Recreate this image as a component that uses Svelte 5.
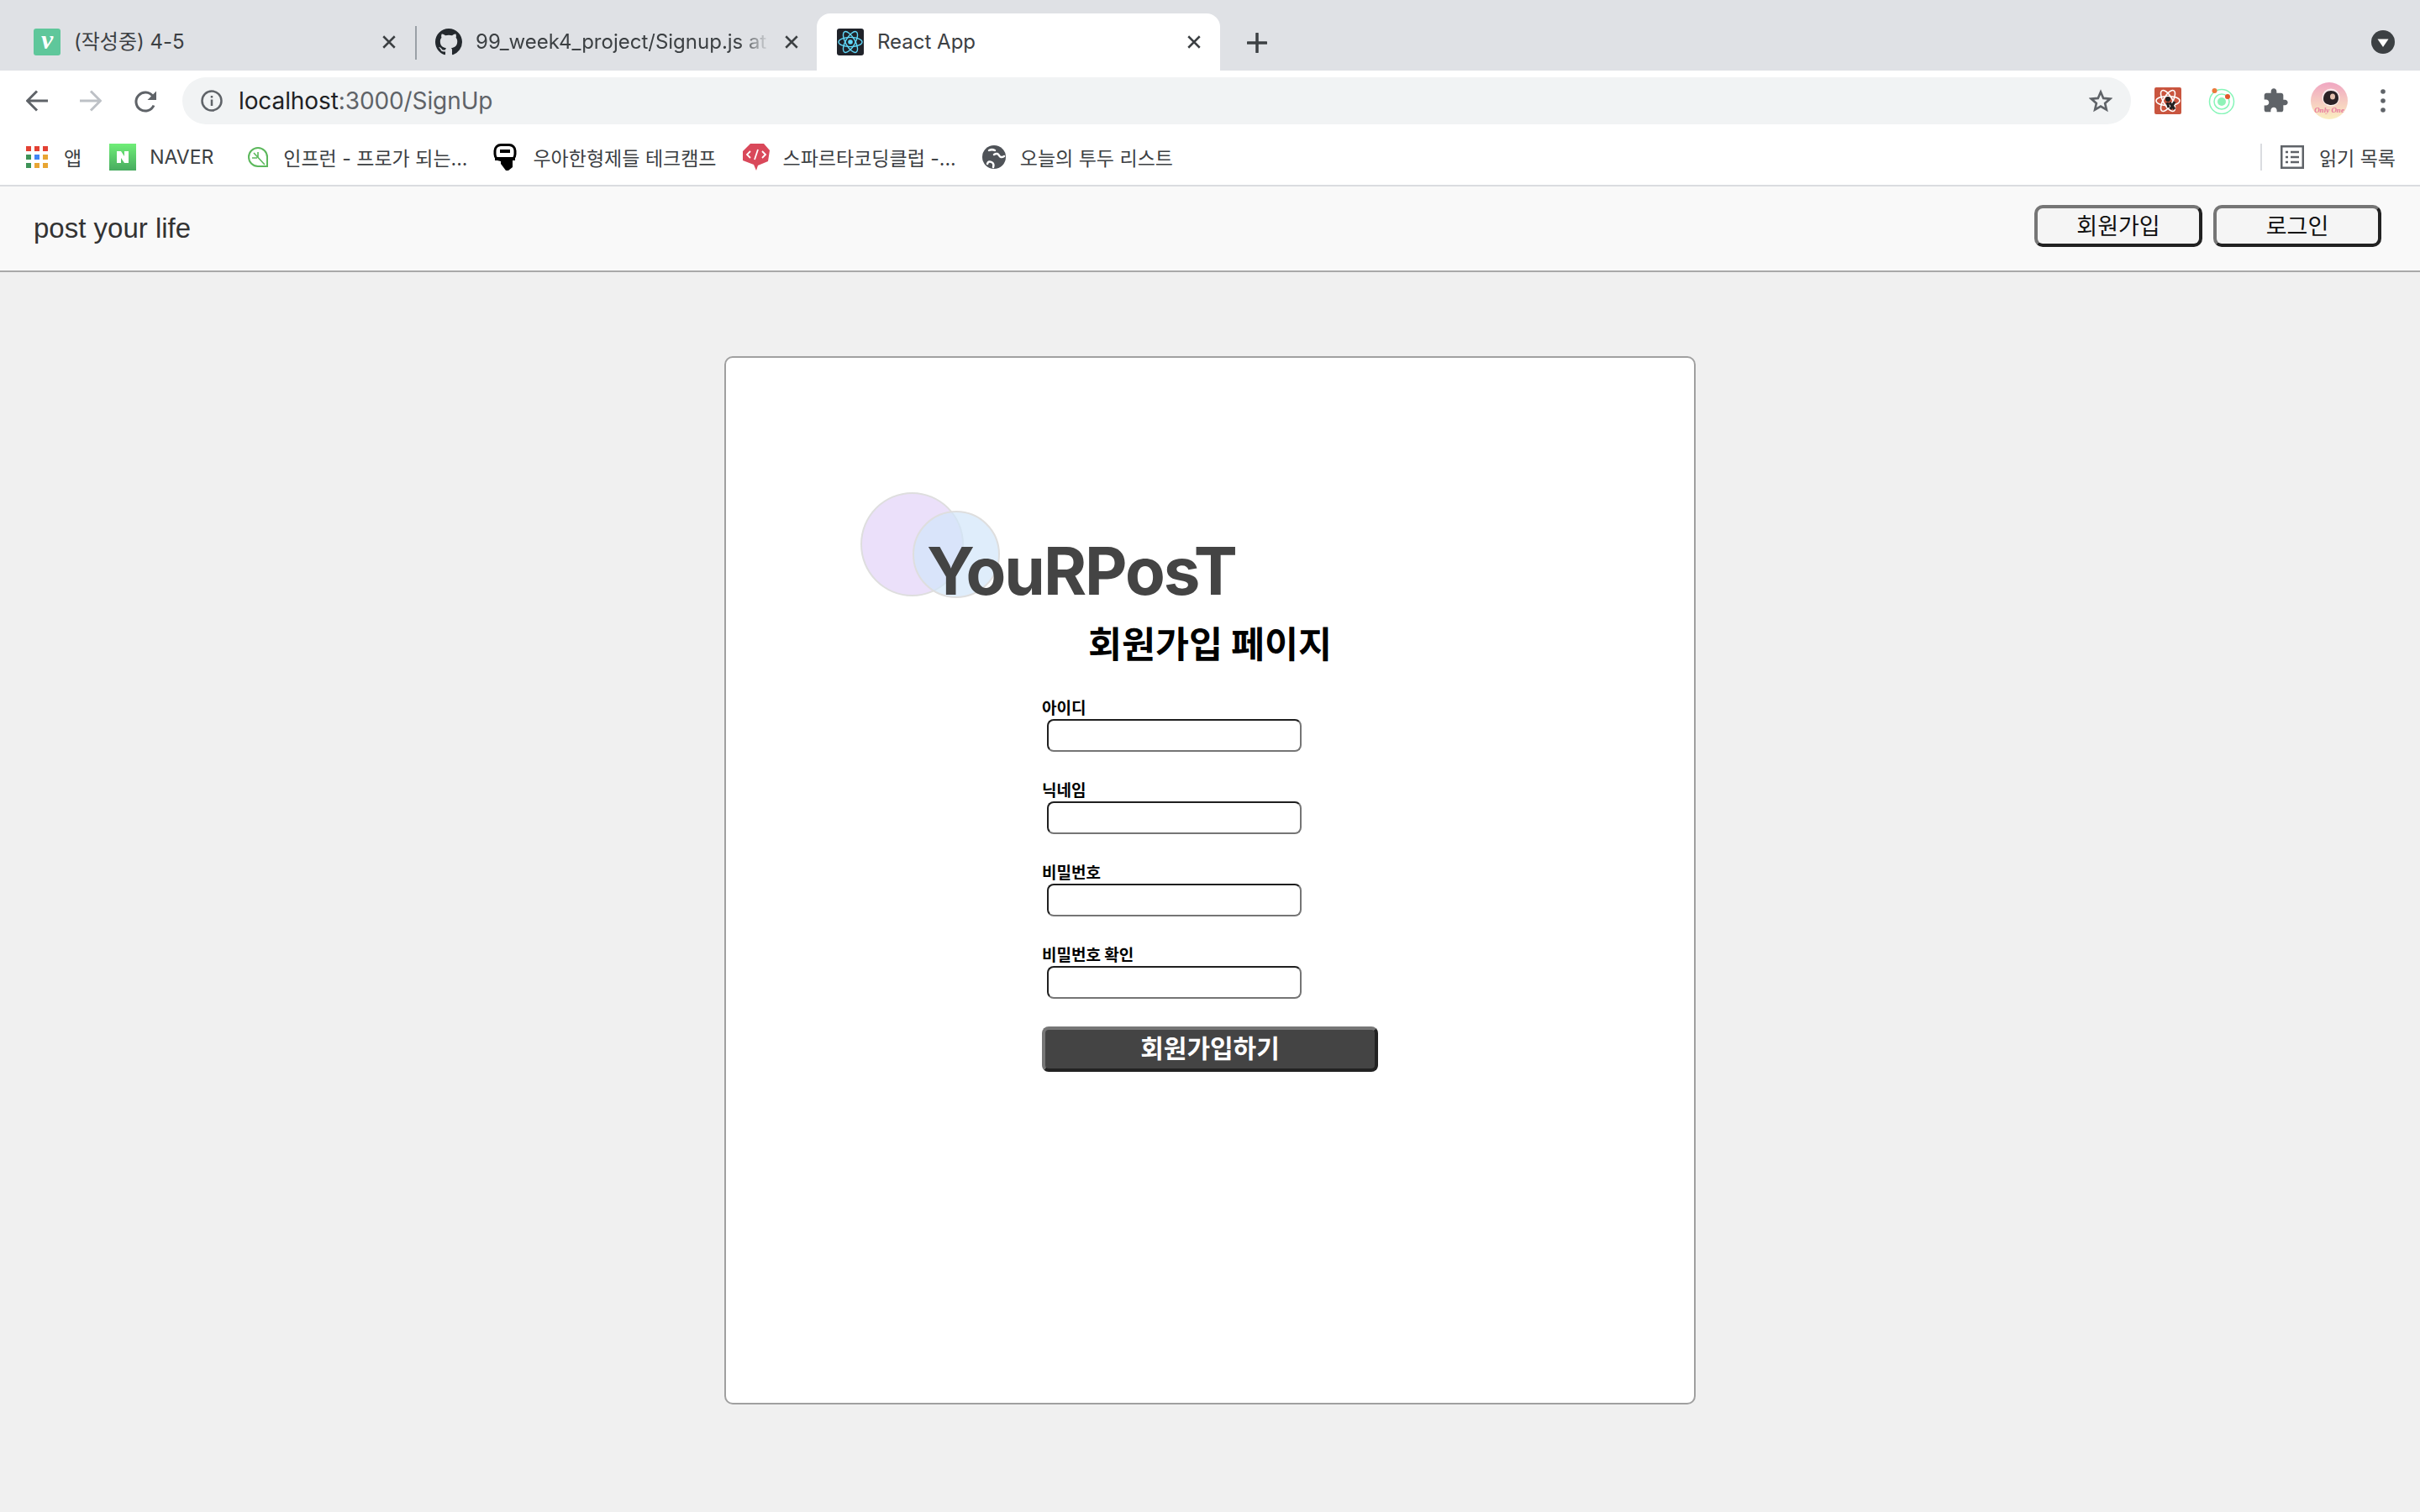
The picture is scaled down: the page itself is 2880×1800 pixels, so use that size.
<script>
	const fields = ['아이디', '닉네임', '비밀번호', '비밀번호 확인']
</script>

<div class="chrome">
	<div class="tabstrip">
		<div class="tab first">
			<div class="fav vimeo">v</div>
			<span class="tab-title">(작성중) 4-5</span>
			<svg class="close" viewBox="0 0 16 16"><path d="M2 2l12 12M14 2L2 14" /></svg>
		</div>
		<div class="tab-sep"></div>
		<div class="tab second">
			<svg class="fav" viewBox="0 0 16 16"><path fill="#24292e" d="M8 0C3.58 0 0 3.58 0 8c0 3.54 2.29 6.53 5.47 7.59.4.07.55-.17.55-.38 0-.19-.01-.82-.01-1.49-2.01.37-2.53-.49-2.69-.94-.09-.23-.48-.94-.82-1.13-.28-.15-.68-.52-.01-.53.63-.01 1.08.58 1.23.82.72 1.21 1.87.87 2.33.66.07-.52.28-.87.51-1.07-1.78-.2-3.64-.89-3.64-3.95 0-.87.31-1.59.82-2.15-.08-.2-.36-1.02.08-2.12 0 0 .67-.21 2.2.82.64-.18 1.32-.27 2-.27s1.36.09 2 .27c1.53-1.04 2.2-.82 2.2-.82.44 1.1.16 1.92.08 2.12.51.56.82 1.27.82 2.15 0 3.07-1.87 3.75-3.65 3.95.29.25.54.73.54 1.48 0 1.07-.01 1.93-.01 2.2 0 .21.15.46.55.38A8.01 8.01 0 0 0 16 8c0-4.42-3.58-8-8-8z" /></svg>
			<span class="tab-title fade">99_week4_project/Signup.js at</span>
			<svg class="close" viewBox="0 0 16 16"><path d="M2 2l12 12M14 2L2 14" /></svg>
		</div>
		<div class="tab active">
			<svg class="fav" viewBox="0 0 32 32">
				<rect width="32" height="32" rx="3" fill="#20232a" />
				<g fill="none" stroke="#61dafb" stroke-width="1.4">
					<ellipse cx="16" cy="16" rx="14" ry="5.6" />
					<ellipse cx="16" cy="16" rx="14" ry="5.6" transform="rotate(60 16 16)" />
					<ellipse cx="16" cy="16" rx="14" ry="5.6" transform="rotate(120 16 16)" />
				</g>
				<circle cx="16" cy="16" r="2.8" fill="#61dafb" />
			</svg>
			<span class="tab-title">React App</span>
			<svg class="close" viewBox="0 0 16 16"><path d="M2 2l12 12M14 2L2 14" /></svg>
		</div>
		<svg class="newtab" viewBox="0 0 24 24"><path d="M12 1v22M1 12h22" /></svg>
		<svg class="tabsearch" viewBox="0 0 28 28"><circle cx="14" cy="14" r="14" fill="#3c4043" /><path d="M7.5 10.5h13L14 20z" fill="#fff" /></svg>
	</div>

	<div class="toolbar">
		<svg class="nav-icon" viewBox="0 0 26 26"><path d="M26 13H2M13 1.500L1.500 13 13 24.500" /></svg>
		<svg class="nav-icon disabled" viewBox="0 0 26 26"><path d="M0 13h24M13 1.500L24.500 13 13 24.500" /></svg>
		<svg class="nav-icon reload" viewBox="0 0 28 28">
			<path d="M24 18.500a11 11 0 1 1-1.200-11" />
			<path class="solid" d="M27 1.500V12H16.500z" />
		</svg>
		<div class="omnibox">
			<svg class="info" viewBox="0 0 26 26">
				<circle cx="13" cy="13" r="11.500" />
				<path d="M13 11.500v7.500M13 7v2.500" />
			</svg>
			<span class="url">localhost<span class="url-rest">:3000/SignUp</span></span>
			<svg class="star" viewBox="0 0 28 28"><path d="M14 3.500l3.200 7.400 8 .7-6.100 5.300 1.800 7.800L14 20.600l-6.900 4.100 1.800-7.800-6.100-5.300 8-.7z" /></svg>
		</div>
		<div class="extensions">
			<svg class="ext" viewBox="0 0 32 32">
				<rect width="32" height="32" rx="2" fill="#c9553f" />
				<g fill="none" stroke="#fff" stroke-width="1.600">
					<ellipse cx="16" cy="16" rx="14" ry="5.500" />
					<ellipse cx="16" cy="16" rx="14" ry="5.500" transform="rotate(60 16 16)" />
					<ellipse cx="16" cy="16" rx="14" ry="5.500" transform="rotate(120 16 16)" />
				</g>
				<circle cx="16" cy="14" r="3" fill="#222" />
				<path d="M18 18l6 8M24 17l-5 9M15 18l2 6" stroke="#222" stroke-width="3" />
			</svg>
			<svg class="ext ring" viewBox="0 0 32 32">
				<g fill="none" stroke="#86f5b8" stroke-width="1.500">
					<circle cx="16" cy="17" r="14.500" />
					<circle cx="16" cy="17" r="9" />
				</g>
				<circle cx="16" cy="17" r="5" fill="#8ff2b8" />
				<circle cx="7.500" cy="4" r="3" fill="#ea7a3c" />
				<circle cx="23" cy="11" r="3" fill="#e2572c" />
			</svg>
			<svg class="ext puzzle" viewBox="0 0 24 24"><path d="M20.500 11H19V7c0-1.100-.9-2-2-2h-4V3.500C13 2.120 11.880 1 10.500 1S8 2.120 8 3.500V5H4c-1.100 0-1.990.9-1.990 2v3.800H3.500c1.490 0 2.700 1.210 2.700 2.700s-1.210 2.700-2.700 2.700H2V20c0 1.100.9 2 2 2h3.800v-1.500c0-1.490 1.210-2.700 2.700-2.700 1.490 0 2.700 1.210 2.700 2.700V22H17c1.100 0 2-.9 2-2v-4h1.500c1.380 0 2.500-1.120 2.500-2.500S21.880 11 20.500 11z" /></svg>
			<svg class="avatar" viewBox="0 0 44 44">
				<defs>
					<linearGradient id="avatar-bg" x1="0" y1="0" x2="0" y2="1">
						<stop offset="0" stop-color="#f0a6c2" />
						<stop offset="1" stop-color="#fbeec0" />
					</linearGradient>
				</defs>
				<circle cx="22" cy="22" r="22" fill="url(#avatar-bg)" />
				<circle cx="24" cy="18" r="10.500" fill="#fff" opacity=".7" />
				<path d="M15 20c0-7 4-10 9-10s9 3 9 9c0 5-4 8-9 8-3 0-9-2-9-7z" fill="#2b2226" />
				<ellipse cx="26" cy="17" rx="3" ry="3.500" fill="#e3bfae" />
				<text x="22" y="36" class="avatar-text">Only One</text>
			</svg>
			<svg class="menu" viewBox="0 0 6 28"><circle cx="3" cy="3" r="2.800" /><circle cx="3" cy="14" r="2.800" /><circle cx="3" cy="25" r="2.800" /></svg>
		</div>
	</div>

	<div class="bookmarks">
		<div class="bm apps">
			<svg class="bm-icon" viewBox="0 0 26 26">
				<rect x="0" width="6" height="6" fill="#e34133" /><rect x="10" width="6" height="6" fill="#e34133" /><rect x="20" width="6" height="6" fill="#e34133" />
				<rect x="0" y="10" width="6" height="6" fill="#3e9357" /><rect x="10" y="10" width="6" height="6" fill="#4285f4" /><rect x="20" y="10" width="6" height="6" fill="#e8a533" />
				<rect x="0" y="20" width="6" height="6" fill="#3e9357" /><rect x="10" y="20" width="6" height="6" fill="#e8a533" /><rect x="20" y="20" width="6" height="6" fill="#e8a533" />
			</svg>
			<span>앱</span>
		</div>
		<div class="bm naver">
			<svg class="bm-fav" viewBox="0 0 32 32">
				<defs>
					<linearGradient id="naver-bg" x1="0" y1="0" x2="0" y2="1">
						<stop offset="0" stop-color="#6fee77" />
						<stop offset="1" stop-color="#47ab5f" />
					</linearGradient>
				</defs>
				<rect width="32" height="32" fill="url(#naver-bg)" />
				<path d="M9 9h5l4 6V9h5v14h-5l-4-6v6H9z" fill="#fff" />
			</svg>
			<span>NAVER</span>
		</div>
		<div class="bm inflearn">
			<svg class="bm-fav small" viewBox="0 0 24 24" fill="none" stroke="#5cb85c" stroke-width="2">
				<path d="M23 23H12A11 11 0 1 1 23 12z" />
				<path d="M7 7l13 14M12 13V6M11 13H5" stroke-width="1.600" />
			</svg>
			<span>인프런 - 프로가 되는...</span>
		</div>
		<div class="bm woowa">
			<svg class="bm-fav mic" viewBox="0 0 30 32">
				<rect x="3" y="1.500" width="24" height="18" rx="7" fill="#fff" stroke="#000" stroke-width="3" />
				<rect x="9" y="7" width="12" height="4" fill="#000" />
				<rect x="3" y="16" width="24" height="4" fill="#000" />
				<path d="M10 20h14v8l-5 4h-3l-6-8z" fill="#000" />
			</svg>
			<span>우아한형제들 테크캠프</span>
		</div>
		<div class="bm sparta">
			<svg class="bm-fav" viewBox="0 0 32 32">
				<path d="M9 0h16l7 8-2 13-12 5-2 6-3-7-13-5V9z" fill="#d9485a" />
				<path d="M9 9l-4 4 4 4M23 9l4 4-4 4M18 7l-4 12" fill="none" stroke="#fff" stroke-width="1.800" />
			</svg>
			<span>스파르타코딩클럽 -...</span>
		</div>
		<div class="bm todo">
			<svg class="bm-fav globe" viewBox="0 0 28 28">
				<circle cx="14" cy="14" r="14" fill="#4f5358" />
				<path d="M6 22c1-3 3-3 5-2s3 3 2 6M14 11c3-2 5-1 6 1s3 3 6 1M8 6c2-1 5-1 7 0" fill="none" stroke="#fff" stroke-width="2.500" stroke-linecap="round" />
			</svg>
			<span>오늘의 투두 리스트</span>
		</div>
		<div class="reading">
			<div class="reading-sep"></div>
			<svg class="list-icon" viewBox="0 0 28 28">
				<rect x="1.250" y="1.250" width="25.500" height="25.500" fill="none" stroke="#5f6368" stroke-width="2.500" />
				<path d="M6 8h3M12 8h10M6 14h3M12 14h10M6 20h3M12 20h10" stroke="#5f6368" stroke-width="2.500" />
			</svg>
			<span>읽기 목록</span>
		</div>
	</div>
</div>

<header class="site-nav">
	<span class="brand">post your life</span>
	<div class="nav-buttons">
		<button>회원가입</button>
		<button>로그인</button>
	</div>
</header>

<main class="page">
	<section class="card">
		<div class="logo">
			<span class="circle purple"></span>
			<span class="circle blue"></span>
			<span class="logo-text">YouRPosT</span>
		</div>
		<h1>회원가입 페이지</h1>
		<form class="signup">
			{#each fields as field}
				<label class="field">
					<span>{field}</span>
					<input type="text" />
				</label>
			{/each}
			<button class="submit" type="button">회원가입하기</button>
		</form>
	</section>
</main>

<style>
	:global(body) {
		margin: 0;
		background: #f0f0f0;
		font-family: Inter, "Noto Sans CJK KR", sans-serif;
	}

	/* browser frame */
	.chrome {
		background: #fff;
		color: #3c4043;
	}

	.tabstrip {
		height: 84px;
		background: #dfe1e5;
		display: flex;
		align-items: flex-end;
		position: relative;
		font-size: 24px;
	}

	.tab {
		height: 68px;
		box-sizing: border-box;
		display: flex;
		align-items: center;
		flex: none;
	}

	.tab.first {
		width: 494px;
		padding: 0 22px 0 40px;
	}

	.tab.second {
		width: 476px;
		padding: 0 21px 0 22px;
	}

	.tab.active {
		width: 480px;
		padding: 0 22px 0 24px;
		background: #fff;
		border-radius: 16px 16px 0 0;
	}

	.tab-sep {
		width: 2px;
		height: 40px;
		margin-bottom: 13px;
		background: #9aa0a6;
		flex: none;
	}

	.fav {
		width: 32px;
		height: 32px;
		flex: none;
	}

	.vimeo {
		background: #5fc79b;
		border-radius: 3px;
		color: #fff;
		font-family: "Liberation Serif", serif;
		font-style: italic;
		font-weight: 700;
		font-size: 32px;
		line-height: 27px;
		text-align: center;
	}

	.tab-title {
		margin-left: 16px;
		flex: 1;
		white-space: nowrap;
		overflow: hidden;
		color: #3c4043;
		line-height: 36px;
	}

	.second .tab-title {
		margin-right: 10px;
	}

	.fade {
		mask-image: linear-gradient(to right, #000 88%, transparent 98%);
	}

	.close {
		width: 18px;
		height: 18px;
		flex: none;
		fill: none;
		stroke: #3c4043;
		stroke-width: 2.200;
	}

	.newtab {
		width: 24px;
		height: 24px;
		margin: 0 0 21px 32px;
		flex: none;
		fill: none;
		stroke: #3c4043;
		stroke-width: 3.500;
		stroke-linecap: round;
	}

	.tabsearch {
		position: absolute;
		right: 30px;
		top: 36px;
		width: 28px;
		height: 28px;
	}

	.toolbar {
		height: 64px;
		padding-top: 8px;
		box-sizing: border-box;
		display: flex;
		align-items: flex-start;
	}

	.nav-icon {
		width: 26px;
		height: 26px;
		margin: 15px 0 0 38px;
		flex: none;
		fill: none;
		stroke: #5f6368;
		stroke-width: 3;
	}

	.nav-icon:first-child {
		margin-left: 31px;
	}

	.nav-icon.disabled {
		stroke: #bdc1c6;
	}

	.nav-icon.reload {
		width: 28px;
		height: 28px;
	}

	.solid {
		fill: #5f6368;
		stroke: none;
	}

	.omnibox {
		width: 2319px;
		height: 56px;
		margin-left: 30px;
		flex: none;
		background: #f1f3f4;
		border-radius: 28px;
		display: flex;
		align-items: center;
		padding: 0 22px;
		box-sizing: border-box;
	}

	.info {
		width: 26px;
		height: 26px;
		flex: none;
		fill: none;
		stroke: #5f6368;
		stroke-width: 2.500;
	}

	.url {
		margin-left: 19px;
		font-size: 28px;
		letter-spacing: -0.1px;
		color: #202124;
		flex: 1;
	}

	.url-rest {
		color: #5f6368;
	}

	.star {
		width: 28px;
		height: 28px;
		fill: none;
		stroke: #5f6368;
		stroke-width: 2.600;
	}

	.extensions {
		display: flex;
		align-items: center;
		height: 56px;
		margin-left: 28px;
	}

	.ext {
		width: 32px;
		height: 32px;
		flex: none;
	}

	.ring {
		margin-left: 32px;
	}

	.puzzle {
		margin-left: 32px;
		fill: #5f6368;
	}

	.avatar {
		width: 44px;
		height: 44px;
		margin-left: 26px;
		flex: none;
	}

	.avatar-text {
		font-family: "Liberation Serif", serif;
		font-style: italic;
		font-size: 9px;
		font-weight: 700;
		fill: #e8789c;
		text-anchor: middle;
	}

	.menu {
		width: 6px;
		height: 28px;
		margin-left: 39px;
		fill: #5f6368;
		flex: none;
	}

	.bookmarks {
		height: 74px;
		padding-top: 6px;
		box-sizing: border-box;
		border-bottom: 2px solid #dadce0;
		display: flex;
		align-items: center;
		font-size: 23px;
		color: #3c4043;
		white-space: nowrap;
	}

	.bm {
		display: flex;
		align-items: center;
		flex: none;
	}

	.bm-icon {
		width: 26px;
		height: 26px;
		margin-right: 19px;
		flex: none;
	}

	.bm-fav {
		width: 32px;
		height: 32px;
		margin-right: 16px;
		flex: none;
	}

	.bm-fav.small {
		width: 24px;
		height: 24px;
		margin-right: 18px;
	}

	.bm-fav.mic {
		width: 30px;
		margin-right: 18px;
	}

	.bm-fav.globe {
		width: 28px;
		height: 28px;
		margin-right: 17px;
	}

	.apps {
		margin-left: 31px;
	}

	.naver {
		margin-left: 33px;
	}

	.inflearn {
		margin-left: 41px;
	}

	.woowa {
		margin-left: 30px;
	}

	.sparta {
		margin-left: 31px;
	}

	.todo {
		margin-left: 31px;
	}

	.reading {
		margin-left: auto;
		padding-right: 29px;
		display: flex;
		align-items: center;
	}

	.reading-sep {
		width: 2px;
		height: 32px;
		background: #dadce0;
		margin-right: 22px;
	}

	.list-icon {
		width: 28px;
		height: 28px;
		margin-right: 18px;
	}

	/* page */
	.site-nav {
		height: 102px;
		box-sizing: border-box;
		background: #f9f9f9;
		border-bottom: 2px solid #a9a9a9;
		display: flex;
		justify-content: space-between;
		align-items: flex-start;
		padding: 22px 46px 0 40px;
	}

	.brand {
		font-size: 33px;
		line-height: 56px;
		color: #333;
		font-family: "Liberation Sans", sans-serif;
	}

	.nav-buttons {
		display: flex;
		gap: 13px;
	}

	.nav-buttons button {
		width: 200px;
		height: 50px;
		padding: 0 0 6px;
		border: 4px solid;
		border-color: #767676 #222 #222 #767676;
		border-radius: 10px;
		background: #f5f5f5;
		color: #111;
		font-family: inherit;
		font-size: 27px;
	}

	.page {
		padding: 100px 0;
		display: flex;
		justify-content: center;
	}

	.card {
		width: 1156px;
		height: 1248px;
		box-sizing: border-box;
		background: #fff;
		border: 2px solid #a0a0a0;
		border-radius: 10px;
		display: flex;
		flex-direction: column;
		align-items: center;
	}

	.logo {
		align-self: flex-start;
		margin: 160px 0 0 160px;
		height: 126px;
		width: 500px;
		position: relative;
	}

	.circle {
		position: absolute;
		border-radius: 50%;
		border: 2px solid #dedede;
		box-sizing: border-box;
	}

	.purple {
		left: 0;
		top: 0;
		width: 123px;
		height: 124px;
		background: #ebe0fa;
	}

	.blue {
		left: 62px;
		top: 22px;
		width: 104px;
		height: 104px;
		background: rgba(210, 229, 250, 0.7);
	}

	.logo-text {
		position: absolute;
		left: 79px;
		top: 47px;
		font-size: 78px;
		line-height: 94px;
		font-weight: 700;
		color: #444;
		letter-spacing: -2px;
	}

	h1 {
		margin: 25px 0 0;
		font-size: 43.500px;
		line-height: 56px;
		font-weight: 700;
		color: #000;
		font-family: "Noto Sans CJK KR", sans-serif;
	}

	.signup {
		width: 400px;
		margin-top: 35px;
		display: flex;
		flex-direction: column;
		gap: 15px;
	}

	.field {
		display: flex;
		flex-direction: column;
		align-items: flex-start;
		height: 83px;
	}

	.field span {
		font-size: 19px;
		line-height: 28px;
		font-weight: 700;
		color: #000;
		font-family: "Noto Sans CJK KR", sans-serif;
		height: 28px;
	}

	.field input {
		width: 303px;
		height: 39px;
		box-sizing: border-box;
		margin: 0 0 0 6px;
		padding: 0;
		background: #fff;
		border: 2px solid;
		border-color: #1f1f1f #757575 #757575 #1f1f1f;
		border-radius: 8px;
		outline: none;
	}

	.submit {
		width: 400px;
		height: 54px;
		margin-top: 2px;
		padding: 0 0 7px;
		background: #444;
		border: 4px solid;
		border-color: #767676 #222 #222 #767676;
		border-radius: 8px;
		color: #fff;
		font-size: 30px;
		line-height: 30px;
		font-weight: 700;
		font-family: "Noto Sans CJK KR", sans-serif;
	}
</style>
